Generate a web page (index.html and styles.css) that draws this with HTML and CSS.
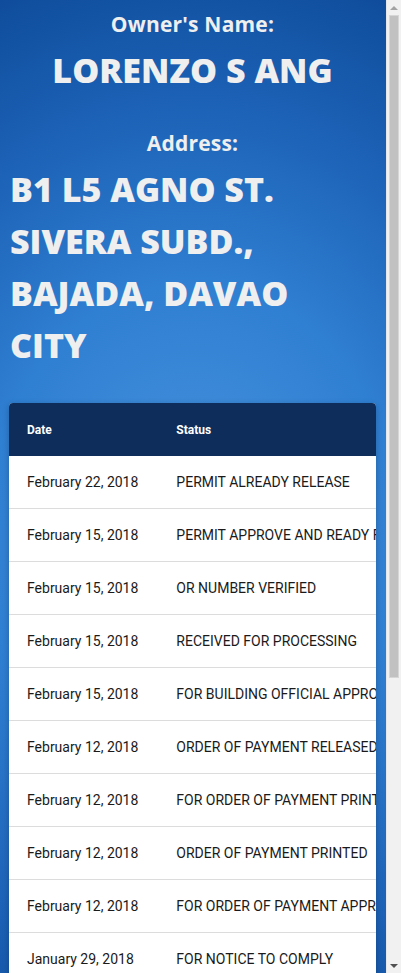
FILE: index.html
```html
<!DOCTYPE html>
<html lang="en">
<head>
<meta charset="utf-8">
<title>Permit Status</title>
<link rel="stylesheet" href="styles.css">
</head>
<body>
<main class="page">
  <section class="owner">
    <h3 class="label">Owner's Name:</h3>
    <h1 class="name">LORENZO S ANG</h1>
    <h3 class="label label-address">Address:</h3>
    <h1 class="address">B1 L5 AGNO ST. SIVERA SUBD., BAJADA, DAVAO CITY</h1>
  </section>
  <section class="card">
    <table class="status-table">
      <thead>
        <tr><th>Date</th><th>Status</th></tr>
      </thead>
      <tbody>
        <tr><td>February 22, 2018</td><td>PERMIT ALREADY RELEASE</td></tr>
        <tr><td>February 15, 2018</td><td>PERMIT APPROVE AND READY FOR RELEASE</td></tr>
        <tr><td>February 15, 2018</td><td>OR NUMBER VERIFIED</td></tr>
        <tr><td>February 15, 2018</td><td>RECEIVED FOR PROCESSING</td></tr>
        <tr><td>February 15, 2018</td><td>FOR BUILDING OFFICIAL APPROVAL</td></tr>
        <tr><td>February 12, 2018</td><td>ORDER OF PAYMENT RELEASED</td></tr>
        <tr><td>February 12, 2018</td><td>FOR ORDER OF PAYMENT PRINTING</td></tr>
        <tr><td>February 12, 2018</td><td>ORDER OF PAYMENT PRINTED</td></tr>
        <tr><td>February 12, 2018</td><td>FOR ORDER OF PAYMENT APPROVAL</td></tr>
        <tr><td>January 29, 2018</td><td>FOR NOTICE TO COMPLY</td></tr>
        <tr><td>January 29, 2018</td><td>FOR EVALUATION</td></tr>
        <tr><td>January 26, 2018</td><td>RECEIVED FOR EVALUATION</td></tr>
        <tr><td>January 26, 2018</td><td>FOR ASSESSMENT</td></tr>
        <tr><td>January 26, 2018</td><td>APPLICATION RECEIVED</td></tr>
        <tr><td>January 25, 2018</td><td>APPLICATION FILED</td></tr>
        <tr><td>January 25, 2018</td><td>FOR VERIFICATION</td></tr>
      </tbody>
    </table>
  </section>
</main>
<div class="scrollbar" aria-hidden="true">
  <div class="sb-arrow sb-up"></div>
  <div class="sb-track"><div class="sb-thumb"></div></div>
  <div class="sb-arrow sb-down"></div>
</div>
</body>
</html>
```

FILE: styles.css
```css
html {
  background-color: #1d64ba;
  background-image: radial-gradient(ellipse 520px 640px at 193px 540px, #4a94de 0%, #2f7fd2 40%, #1b60b4 70%, #0b4693 100%);
  background-repeat: no-repeat;
}
body {
  margin: 0;
  padding-right: 15px;
  font-family: "Open Sans", "Liberation Sans", sans-serif;
}
.page {
  padding: 9px 10px 30px 9px;
}
.owner {
  color: #efefef;
}
.label {
  margin: 0;
  font-size: 21px;
  line-height: 30px;
  font-weight: 700;
  letter-spacing: 0.2px;
  text-align: center;
}
.label-address {
  margin-top: 32px;
}
.name {
  margin: 5px 0 0;
  font-size: 34px;
  line-height: 52px;
  font-weight: 800;
  text-align: center;
}
.address {
  max-width: 340px;
  margin: 5px 0 0 1px;
  font-size: 34px;
  line-height: 52px;
  font-weight: 800;
  text-align: left;
}
.card {
  margin-top: 32px;
  background: #fff;
  border-radius: 4px;
  overflow: hidden;
  box-shadow: 0 2px 6px rgba(0, 0, 0, 0.25);
}
.status-table {
  border-collapse: collapse;
  font-family: Roboto, "Liberation Sans", sans-serif;
  white-space: nowrap;
}
.status-table th {
  background: #0e2d5a;
  color: #fff;
  font-size: 12px;
  font-weight: 700;
  text-align: left;
  height: 53px;
  padding: 0 18px;
}
.status-table td {
  font-size: 14px;
  color: #1a1a1a;
  height: 52px;
  padding: 0 18px;
  border-bottom: 1px solid #dcdcdc;
}
.status-table td:first-child,
.status-table th:first-child {
  padding-right: 20px;
}
.scrollbar {
  position: fixed;
  top: 0;
  right: 0;
  width: 15px;
  height: 100vh;
  display: flex;
  flex-direction: column;
  background: #f1f1f1;
  border-left: 1px solid #e6e6e6;
  box-sizing: border-box;
}
.sb-arrow {
  height: 15px;
  flex: none;
  display: flex;
  align-items: center;
  justify-content: center;
}
.sb-arrow::before {
  content: "";
  border-left: 4px solid transparent;
  border-right: 4px solid transparent;
}
.sb-up::before {
  border-bottom: 4px solid #a3a3a3;
}
.sb-down::before {
  border-top: 4px solid #505050;
}
.sb-track {
  flex: 1;
  padding: 0 2px;
}
.sb-thumb {
  height: 661px;
  background: #c1c1c1;
  border: 1px solid #d6d6d6;
}
```
